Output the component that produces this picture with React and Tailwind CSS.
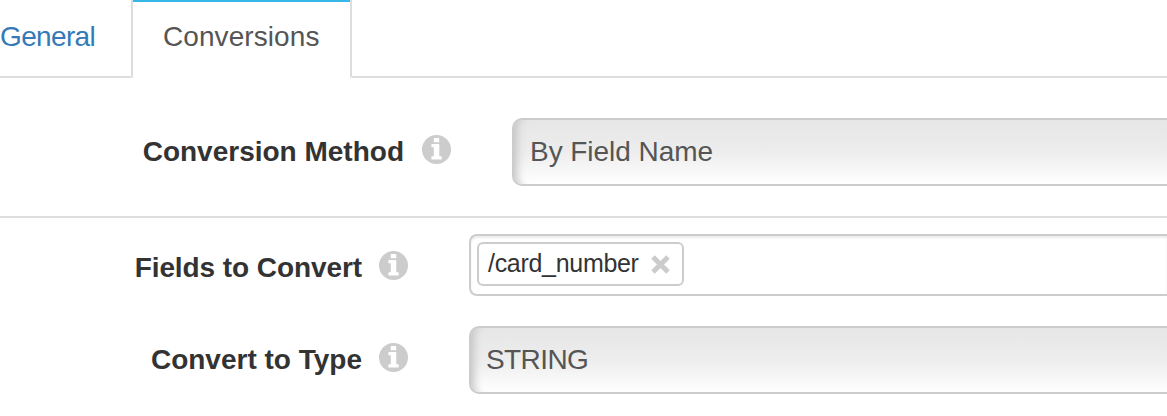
function InfoIcon() {
  return (
    <svg viewBox="0 0 29 29" className="h-[29px] w-[29px] shrink-0" aria-hidden="true">
      <circle cx="14.5" cy="14.5" r="14.5" fill="#ccc" />
      <path d="M12.300 3h4.400q.5 0 .5.5v3.200q0 .5-.5.5h-4.400q-.5 0-.5-.5v-3.200q0-.5.5-.5zM9.900 8.900h6.900q.5 0 .5.5v11.800h1.900q.5 0 .5.5v2.300q0 .5-.5.500h-9.300q-.5 0-.5-.5v-2.300q0-.5.5-.5h1.900V12.300h-1.900q-.5 0-.5-.5V9.400q0-.5.500-.5z" fill="#fff" />
    </svg>
  );
}

function Label({ children, className, textClass }) {
  return (
    <div className={`flex shrink-0 items-start justify-end pt-[17px] ${className}`}>
      <span className={`pt-px whitespace-nowrap text-[28px] leading-8 font-bold text-[#333] ${textClass}`}>{children}</span>
      <InfoIcon />
    </div>
  );
}

function Select({ children, className }) {
  return (
    <div className={`h-[68px] flex-1 rounded-l-[10px] border-2 border-r-0 border-[#ccc] bg-linear-to-b from-[#e6e6e6] via-[#ededed] to-white pt-4 text-[28px] leading-8 text-[#555] shadow-[inset_12px_0_8px_-9px_#c4c4c4] ${className}`}>
      {children}
    </div>
  );
}

export default function App() {
  return (
    <div className="h-[416px] w-full overflow-hidden bg-white font-['Liberation_Sans',Arial,sans-serif]">
      <nav className="flex h-[78px] text-[28px] leading-8">
        <a className="w-[131px] border-b-2 border-[#ddd] pt-[21px] tracking-[-0.65px] text-[#337ab7]">General</a>
        <a className="w-[221px] rounded-b-[2px] border-x-2 border-[#ddd] text-[#555]">
          <span className="block border-t-2 border-[#35b8e8] pt-[19px] pl-[30px] tracking-[0.08px]">Conversions</span>
        </a>
        <div className="flex-1 border-b-2 border-[#ddd]" />
      </nav>
      <section className="flex h-[140px] border-b-2 border-[#ddd] pt-10">
        <Label className="w-[451px]" textClass="mr-[18px]">Conversion Method</Label>
        <Select className="ml-[61px] pl-4 tracking-[-0.05px]">By Field Name</Select>
      </section>
      <section className="flex pt-4">
        <Label className="w-[408px]" textClass="mr-[17px] tracking-[-0.08px]">Fields to Convert</Label>
        <div className="ml-[61px] h-[62px] flex-1 rounded-l-[8px] border-2 border-r-0 border-[#ccc] pt-1.5 pl-1.5 shadow-[inset_0_2px_2px_rgba(0,0,0,0.075)]">
          <div className="flex h-11 w-[207px] rounded-[6px] border-2 border-[#ccc] bg-white pt-1 pl-[9px] text-[25px] leading-[30px] text-[#333]">
            <span className="tracking-[-0.3px]">/card_number</span>
            <svg viewBox="0 0 19 19" className="mt-[7px] ml-3 h-[19px] w-[19px] shrink-0" aria-hidden="true">
              <path d="M2 2l15 15M17 2L2 17" stroke="#ccc" strokeWidth="5" />
            </svg>
          </div>
        </div>
      </section>
      <section className="flex pt-[30px]">
        <Label className="w-[408px]" textClass="mr-[17px]">Convert to Type</Label>
        <Select className="ml-[61px] pl-[15px] tracking-[-0.6px]">STRING</Select>
      </section>
    </div>
  );
}
